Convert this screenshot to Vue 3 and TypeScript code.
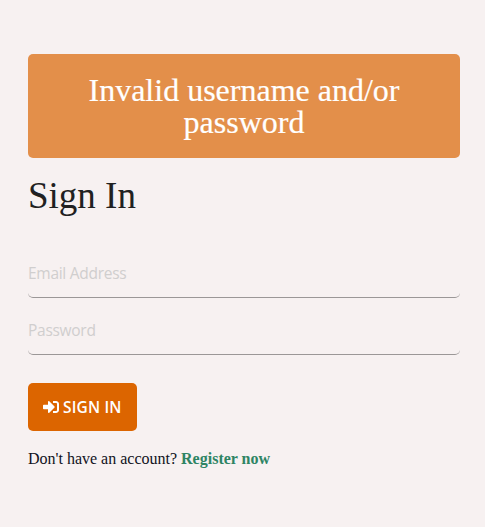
<script setup lang="ts">
import { ref } from 'vue'

const error = ref('Invalid username and/or password')
const email = ref('')
const password = ref('')
</script>

<template>
  <main class="page">
    <div v-if="error" class="alert" role="alert">{{ error }}</div>
    <h1 class="title">Sign In</h1>
    <form class="form" @submit.prevent>
      <input v-model="email" class="field" type="email" placeholder="Email Address" />
      <input v-model="password" class="field" type="password" placeholder="Password" />
      <button class="submit" type="submit">
        <svg class="icon" viewBox="0 0 512 512" aria-hidden="true">
          <path
            fill="currentColor"
            d="M416 448h-84c-6.600 0-12-5.400-12-12v-40c0-6.600 5.400-12 12-12h84c17.700 0 32-14.300 32-32V160c0-17.700-14.300-32-32-32h-84c-6.600 0-12-5.400-12-12V76c0-6.600 5.400-12 12-12h84c53 0 96 43 96 96v192c0 53-43 96-96 96zm-47-209L201 71c-15-15-41-4.500-41 17v96H24c-13.300 0-24 10.700-24 24v96c0 13.300 10.700 24 24 24h136v96c0 21.500 26 32 41 17l168-168c9.300-9.400 9.300-24.600 0-34z"
          />
        </svg>
        <span class="label">SIGN IN</span>
      </button>
    </form>
    <p class="register">Don't have an account? <a class="link" href="#">Register now</a></p>
  </main>
</template>

<style>
body {
  margin: 0;
  background: #f7f1f1;
}
</style>

<style scoped>
.page {
  box-sizing: border-box;
  min-height: 527px;
  padding: 54px 25px 0 28px;
  color: #212121;
  font-family: 'Liberation Serif', 'Times New Roman', serif;
}

.alert {
  box-sizing: border-box;
  height: 104px;
  padding: 20px 32px;
  border-radius: 5px;
  background: #e38f4a;
  color: #fff;
  font-size: 32px;
  line-height: 32px;
  text-align: center;
  -webkit-text-stroke: 0.2px #fff;
}

.title {
  margin: 16px 0 0;
  font-size: 37px;
  font-weight: 400;
  line-height: 44px;
}

.form {
  display: flex;
  flex-direction: column;
  align-items: flex-start;
  margin-top: 32px;
}

.field {
  box-sizing: border-box;
  width: 100%;
  height: 48px;
  margin: 0 0 9px;
  padding: 0 0 2px;
  border: 0;
  border-bottom: 1px solid #9b9797;
  border-radius: 5px;
  outline: none;
  background: transparent;
  color: #212121;
  font-family: 'Open Sans', 'Noto Sans', sans-serif;
  font-size: 15.500px;
  letter-spacing: -0.28px;
}

.field::placeholder {
  color: #d0cece;
  opacity: 1;
}

.submit {
  display: flex;
  align-items: center;
  gap: 4px;
  box-sizing: border-box;
  width: 109px;
  height: 48px;
  margin: 19px 0 0;
  padding: 0 0 0 15px;
  border: 0;
  border-radius: 5px;
  background: #dc6500;
  color: #fff;
  font-family: 'Open Sans', 'Noto Sans', sans-serif;
  font-size: 15.500px;
  font-weight: 600;
  letter-spacing: 0.15px;
}

.icon {
  flex: none;
  width: 16px;
  height: 16px;
}

.label {
  white-space: nowrap;
}

.register {
  margin: 19px 0 0;
  color: #111122;
  font-size: 16px;
  line-height: 18px;
}

.link {
  color: #2e8464;
  font-weight: 700;
  text-decoration: none;
}
</style>
